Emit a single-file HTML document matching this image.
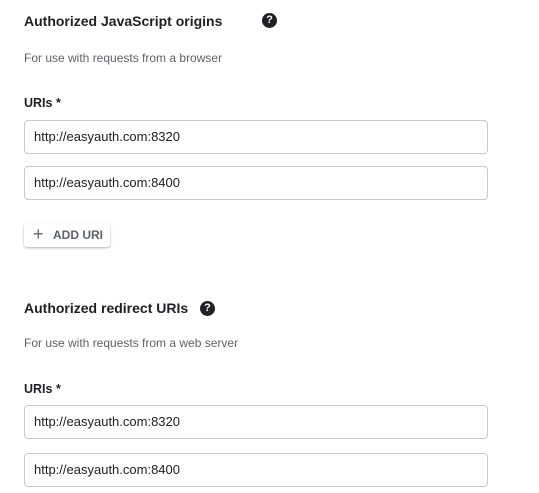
<!DOCTYPE html>
<html><head><style>
body{margin:0;background:#fff;font-family:"Liberation Sans",Arial,sans-serif;width:539px;height:493px;position:relative;overflow:hidden}
.a{position:absolute;white-space:nowrap}
.t{font-size:14px;font-weight:bold;color:#202124;left:24px}
.s{font-size:12px;color:#5f6368;left:24px}
.l{font-size:12.5px;font-weight:bold;color:#202124;left:24px}
.i{left:24px;width:464px;height:34px;border:1px solid #c8c8c8;border-radius:4px;box-sizing:border-box;font-size:13px;color:#202124;padding-left:9px;line-height:32px}
.q{width:15px;height:15px;border-radius:50%;background:#202124;color:#fff;font-size:11px;font-weight:bold;text-align:center;line-height:15px}
.b{left:24px;top:223px;width:86px;height:24px;border-radius:3px;box-shadow:0 1px 2px rgba(0,0,0,.3);font-size:12px;color:#5f6368;font-weight:bold;line-height:24px}
</style></head><body>
<div class="a t" style="top:13px">Authorized JavaScript origins</div>
<div class="a q" style="left:262px;top:13px">?</div>
<div class="a s" style="top:51px">For use with requests from a browser</div>
<div class="a l" style="top:96px">URIs *</div>
<div class="a i" style="top:120px">http://easyauth.com:8320</div>
<div class="a i" style="top:166px">http://easyauth.com:8400</div>
<div class="a b"><span style="font-size:18px;font-weight:normal;position:absolute;left:9px;top:-1px">+</span><span style="position:absolute;left:29px">ADD URI</span></div>
<div class="a t" style="top:300px">Authorized redirect URIs</div>
<div class="a q" style="left:200px;top:301px">?</div>
<div class="a s" style="top:336px">For use with requests from a web server</div>
<div class="a l" style="top:382px">URIs *</div>
<div class="a i" style="top:405px">http://easyauth.com:8320</div>
<div class="a i" style="top:453px">http://easyauth.com:8400</div>
</body></html>
